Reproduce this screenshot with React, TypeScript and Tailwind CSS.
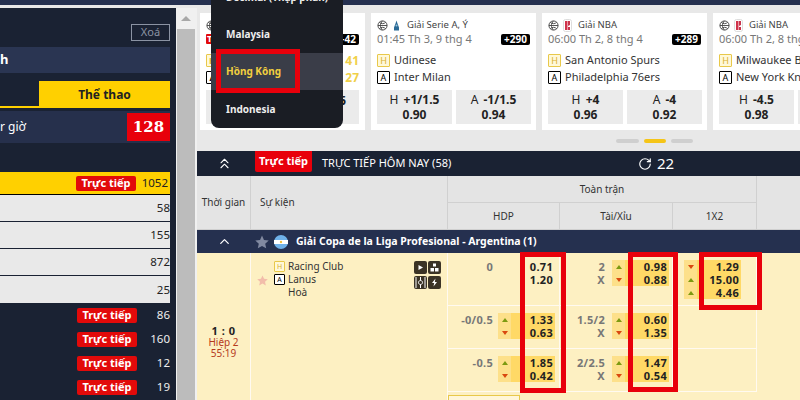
import React from 'react';
import { ChevronUp, ChevronsUp, RotateCw } from 'lucide-react';

const FONT = "[font-family:'Noto_Sans','DejaVu_Sans',sans-serif]";

const TeamTag = ({ side, small }: { side: 'H' | 'A'; small?: boolean }) => {
  const size = small ? 'h-[11px] w-[11px] text-[7px]' : 'h-[13px] w-[13px] text-[9px]';
  return (
    <span
      className={
        side === 'H'
          ? `flex shrink-0 items-center justify-center rounded-[1px] border border-[#e8c84a] bg-[#fff8d8] leading-none text-[#d8b030] ${size}`
          : `flex shrink-0 items-center justify-center rounded-[1px] border border-black bg-white leading-none text-black ${size}`
      }
    >
      {side}
    </span>
  );
};

const BallIcon = () => (
  <svg className="shrink-0" width="11" height="11" viewBox="0 0 12 12" fill="none" stroke="#444" strokeWidth="1">
    <circle cx="6" cy="6" r="5" />
    <path d="M1 6h10M6 1c-3 3-3 7 0 10M2.500 2.500c2 2 5 2 7 0M2.500 9.500c2-2 5-2 7 0" />
  </svg>
);

const LeagueLogo = ({ kind }: { kind: 'serie' | 'nba' }) => (
  <span className="flex w-[10px] shrink-0 justify-center">
    {kind === 'nba' ? (
      <svg width="9" height="13" viewBox="0 0 9 13">
        <rect x="0.500" y="0.500" width="8" height="12" rx="2" fill="#fff" stroke="#ddd" />
        <path d="M2 2h2.500v9H2z" fill="#d0334b" />
        <path d="M5 2h2v4l-2 1zM5 8h2v3H5z" fill="#c8354d" />
      </svg>
    ) : (
      <svg width="7" height="12" viewBox="0 0 7 12">
        <path d="M3.500 0.500l1 3 1.500 4v3H1v-3l1.500-4z" fill="#2a6a96" />
        <circle cx="3.500" cy="5.500" r="1" fill="#9cc6dc" />
      </svg>
    )}
  </span>
);

type CardData = {
  league: string;
  logo: 'serie' | 'nba';
  time: string;
  badge?: string;
  home: string;
  away: string;
  odds: { label: string; line: string; price: string }[];
};

const cards: CardData[] = [
  {
    league: 'Giải Serie A, Ý',
    logo: 'serie',
    time: '01:45 Th 3, 9 thg 4',
    badge: '+290',
    home: 'Udinese',
    away: 'Inter Milan',
    odds: [
      { label: 'H', line: '+1/1.5', price: '0.90' },
      { label: 'A', line: '-1/1.5', price: '0.94' },
    ],
  },
  {
    league: 'Giải NBA',
    logo: 'nba',
    time: '06:00 Th 2, 8 thg 4',
    badge: '+289',
    home: 'San Antonio Spurs',
    away: 'Philadelphia 76ers',
    odds: [
      { label: 'H', line: '+4', price: '0.96' },
      { label: 'A', line: '-4', price: '0.92' },
    ],
  },
  {
    league: 'Giải NBA',
    logo: 'nba',
    time: '06:00 Th 2, 8 thg 4',
    home: 'Milwaukee Bucks',
    away: 'New York Knicks',
    odds: [
      { label: 'H', line: '-4.5', price: '0.98' },
      { label: 'A', line: '+4.5', price: '0.90' },
    ],
  },
];

const MatchCard = ({ card }: { card: CardData }) => (
  <div className="flex h-[117px] w-[165px] shrink-0 flex-col overflow-hidden bg-white px-[6px] pt-[6px]">
    <div className="flex h-[13px] items-center gap-[3px] text-[9.500px] text-[#444]">
      <BallIcon />
      <LeagueLogo kind={card.logo} />
      <span className="ml-[3px] whitespace-nowrap">{card.league}</span>
    </div>
    <div className="flex h-[14px] items-center justify-between text-[11px] text-[#777]">
      <span className="whitespace-nowrap">{card.time}</span>
      {card.badge && (
        <span className="rounded-[2px] bg-black px-[3px] text-[10px] leading-[11px] font-bold text-white">
          {card.badge}
        </span>
      )}
    </div>
    <div className="mt-[6px] flex h-[17px] items-center gap-[4px] text-[11px] whitespace-nowrap text-[#333]">
      <TeamTag side="H" />
      {card.home}
    </div>
    <div className="flex h-[17px] items-center gap-[4px] text-[11px] whitespace-nowrap text-[#333]">
      <TeamTag side="A" />
      {card.away}
    </div>
    <div className="mt-[4px] flex shrink-0 gap-[4px]">
      {card.odds.map(odd => (
        <div
          key={odd.label}
          className="flex h-[34px] w-[75px] shrink-0 flex-col items-center justify-center bg-[#ebebeb] text-[12px] leading-[15px] text-[#222]"
        >
          <span className="whitespace-nowrap">
            {odd.label} <b className="ml-[2px]">{odd.line}</b>
          </span>
          <b>{odd.price}</b>
        </div>
      ))}
    </div>
  </div>
);

// first card sits mostly under the odds format menu
const LiveCard = () => (
  <div className="flex h-[117px] w-[165px] shrink-0 flex-col bg-white px-[6px] pt-[6px]">
    <div className="flex h-[13px] items-center">
      <BallIcon />
    </div>
    <div className="flex h-[14px] items-center justify-between">
      <span className="flex h-[10px] w-[24px] items-center rounded-[1px] bg-[#e20a0a] pl-[1px] text-[9px] font-bold text-white">
        Tr
      </span>
      <span className="rounded-[2px] bg-black px-[3px] text-[10px] leading-[11px] font-bold text-white">+42</span>
    </div>
    <div className="mt-[6px] flex h-[17px] items-center justify-between text-[12px] font-bold text-[#f0d048]">
      <TeamTag side="H" />
      41
    </div>
    <div className="flex h-[17px] items-center justify-between text-[12px] font-bold text-[#f0d048]">
      <TeamTag side="A" />
      27
    </div>
    <div className="mt-[4px] flex gap-[4px]">
      <div className="h-[34px] w-[75px] bg-[#ebebeb]" />
      <div className="flex h-[34px] w-[75px] justify-end bg-[#ebebeb] pr-[13px] pt-[2px] text-[12px] font-bold text-[#222]">
        5
      </div>
    </div>
  </div>
);

const LiveBadge = () => (
  <span className="flex h-[15px] w-[60px] shrink-0 items-center justify-center rounded-[2px] bg-[#e20a0a] text-[11px] font-bold text-white">
    Trực tiếp
  </span>
);

const Arrow = ({ up }: { up: boolean }) => (
  <span
    className={
      up
        ? 'h-0 w-0 border-x-[3px] border-b-[4px] border-x-transparent border-b-[#7c9a10]'
        : 'h-0 w-0 border-x-[3px] border-t-[4px] border-x-transparent border-t-[#d9480f]'
    }
  />
);

type Cell = { hcp?: string[]; prices: string[]; arrows?: boolean[] };

const Prices = ({ cell }: { cell: Cell }) => (
  <div className={cell.arrows ? 'flex w-[57px] bg-[#ffd966]' : 'flex w-[57px]'}>
    <div className={cell.arrows ? 'flex w-[13px] flex-col bg-[#fde08a]' : 'w-[13px]'}>
      {cell.arrows?.map((up, i) => (
        <span key={i} className="flex h-[13px] items-center justify-center">
          <Arrow up={up} />
        </span>
      ))}
    </div>
    <div className="flex-1 pr-[2px] text-right text-[11px] font-bold tracking-[0.3px] text-[#222]">
      {cell.prices.map(price => (
        <div key={price} className="h-[13px] leading-[13px]">
          {price}
        </div>
      ))}
    </div>
  </div>
);

const MarketCell = ({ cell, width, gap }: { cell: Cell; width: string; gap: string }) => (
  <div className={`flex items-start pt-[7px] ${width} border-r border-[#fffaf0]`}>
    <div className="w-[45px] text-right text-[11px] font-bold tracking-[0.3px] text-[#777]">
      {cell.hcp?.map(h => (
        <div key={h} className="h-[13px] leading-[13px]">
          {h}
        </div>
      ))}
    </div>
    <div className={gap} />
    <Prices cell={cell} />
  </div>
);

const oddsRows: { height: string; hdp: Cell; ou: Cell }[] = [
  {
    height: 'h-[53px]',
    hdp: { hcp: ['0'], prices: ['0.71', '1.20'] },
    ou: { hcp: ['2', 'X'], prices: ['0.98', '0.88'], arrows: [true, false] },
  },
  {
    height: 'h-[43px]',
    hdp: { hcp: ['-0/0.5'], prices: ['1.33', '0.63'], arrows: [true, false] },
    ou: { hcp: ['1.5/2', 'X'], prices: ['0.60', '1.35'], arrows: [true, false] },
  },
  {
    height: 'h-[43px]',
    hdp: { hcp: ['-0.5'], prices: ['1.85', '0.42'], arrows: [true, false] },
    ou: { hcp: ['2/2.5', 'X'], prices: ['1.47', '0.54'], arrows: [true, false] },
  },
];

const RedFrame = ({ className }: { className: string }) => (
  <div className={`pointer-events-none absolute border-[5px] border-[#e8000b] ${className}`} />
);

const MiniIcon = ({ children }: { children: React.ReactNode }) => (
  <span className="flex h-[13px] w-[13px] items-center justify-center rounded-[2px] bg-[#3b3325]">
    <svg width="11" height="11" viewBox="0 0 11 11" fill="#fff">
      {children}
    </svg>
  </span>
);

const sportRows = ['58', '155', '872', '25'];
const liveRows = ['86', '160', '12', '19'];

const Sidebar = () => (
  <div className="flex w-[176px] shrink-0 flex-col overflow-hidden bg-[#1a2233] pr-[6px] pt-[16px] text-[11.500px]">
    <div className="flex shrink-0 justify-end">
      <span className="flex h-[17px] w-[39px] items-center justify-center border border-[#8b93a3] text-[11px] text-[#8b93a3]">
        Xoá
      </span>
    </div>
    <div className="mt-[6px] flex h-[26px] shrink-0 items-center bg-[#2a3552] text-[13px] font-bold text-white">h</div>
    <div className="mt-[8px] flex h-[27px] shrink-0">
      <div className="w-[39px] border-b-[2px] border-[#ffd000] bg-[#1a2233]" />
      <div className="flex flex-1 items-center justify-center bg-[#ffd000] text-[12px] font-bold text-[#222]">
        Thể thao
      </div>
    </div>
    <div className="mt-[3px] flex h-[32px] shrink-0 items-center justify-between bg-[#26304c] text-[12px] text-white">
      <span>r giờ</span>
      <span className="flex h-[28px] w-[43px] items-center justify-center bg-[#e8000b] text-[15px] font-bold [font-family:'DejaVu_Serif',serif]">
        128
      </span>
    </div>
    <div className="mt-[29px] flex h-[23px] shrink-0 items-center border-b border-black bg-[#ffd000] pl-[76px] pr-[2px] text-[#222]">
      <LiveBadge />
      <span className="flex-1 text-right">1052</span>
    </div>
    {sportRows.map((n, i) => (
      <div
        key={n}
        className={
          i < 3
            ? 'flex h-[27px] shrink-0 items-center justify-end border-b border-[#1a2233] bg-[#e9e9e9] text-[#222]'
            : 'flex h-[27px] shrink-0 items-center justify-end bg-[#e9e9e9] text-[#222]'
        }
      >
        {n}
      </div>
    ))}
    {liveRows.map(n => (
      <div key={n} className="flex h-[24px] shrink-0 items-center pl-[77px] text-[#eee]">
        <LiveBadge />
        <span className="flex-1 text-right">{n}</span>
      </div>
    ))}
  </div>
);

const Scrollbar = () => (
  <div className="flex w-[21px] shrink-0 flex-col bg-[#f0f0f0] pl-[1px] pr-[2px]">
    <div className="flex h-[21px] items-center justify-center">
      <span className="h-0 w-0 border-x-[5px] border-b-[5px] border-x-transparent border-b-[#a8a8a8]" />
    </div>
    <div className="flex-1 bg-[#bcbcbc]" />
  </div>
);

const App = () => (
  <div className={`relative h-[400px] w-[800px] overflow-hidden bg-[#e8e8e8] ${FONT}`}>
    <div className="h-[5px] bg-[#25304f]" />
    <div className="flex h-[395px] pt-[3px]">
      <Sidebar />
      <Scrollbar />
      <div className="relative flex min-w-0 flex-1 flex-col overflow-hidden text-[10px]">
        <div className="ml-[3px] mt-[5px] flex h-[117px] shrink-0 gap-[6px]">
          <LiveCard />
          {cards.map(card => (
            <MatchCard key={card.league + card.home} card={card} />
          ))}
        </div>
        <div className="flex h-[21px] shrink-0 items-center gap-[5px] pl-[419px]">
          <span className="h-[4px] w-[23px] rounded-full bg-[#cfcfcf]" />
          <span className="h-[4px] w-[22px] rounded-full bg-[#f5c518]" />
          <span className="h-[4px] w-[22px] rounded-full bg-[#cfcfcf]" />
        </div>

        <div className="flex h-[25px] shrink-0 items-center bg-[#1a2233] text-white">
          <div className="flex w-[54px] shrink-0 justify-center">
            <ChevronsUp size={17} strokeWidth={1.5} />
          </div>
          <span className="ml-[4px] flex h-[21px] w-[57px] shrink-0 items-center justify-center self-start rounded-b-[2px] bg-[#e8000b] text-[11px] font-bold">
            Trực tiếp
          </span>
          <span className="ml-[10px] w-[316px] shrink-0 text-[11px]">TRỰC TIẾP HÔM NAY (58)</span>
          <span className="flex items-center gap-[5px] text-[15px]">
            <RotateCw size={14} strokeWidth={2} />
            22
          </span>
        </div>

        <div className="flex h-[53px] shrink-0 bg-[#e4e4e4] text-[#333]">
          <div className="flex w-[54px] shrink-0 items-center justify-center border-r border-[#d0d0d0]">Thời gian</div>
          <div className="flex w-[197px] shrink-0 items-center border-r border-[#d0d0d0] pl-[9px]">Sự kiện</div>
          <div className="flex flex-col">
            <div className="flex h-[27px] w-[309px] items-center justify-center border-b border-r border-[#d0d0d0]">
              Toàn trận
            </div>
            <div className="flex h-[26px]">
              <div className="flex w-[112px] items-center justify-center border-r border-[#d0d0d0]">HDP</div>
              <div className="flex w-[113px] items-center justify-center border-r border-[#d0d0d0]">Tài/Xỉu</div>
              <div className="flex w-[84px] items-center justify-center border-r border-[#d0d0d0]">1X2</div>
            </div>
          </div>
        </div>

        <div className="flex h-[24px] shrink-0 items-center border-t border-[#cfcfcf] bg-[#25304f] text-white">
          <div className="flex w-[54px] shrink-0 justify-center">
            <ChevronUp size={15} strokeWidth={2} />
          </div>
          <svg className="ml-[4px] shrink-0" width="14" height="14" viewBox="0 0 24 24" fill="#8189a0">
            <path d="M12 1l3.400 7.400 8.100.900-6 5.500 1.700 8-7.200-4.100-7.200 4.100 1.700-8-6-5.500 8.100-.900z" />
          </svg>
          <svg className="ml-[5px] shrink-0" width="14" height="14" viewBox="0 0 14 14">
            <circle cx="7" cy="7" r="7" fill="#6fb1e8" />
            <rect x="0" y="5" width="14" height="4" fill="#fff" />
            <circle cx="7" cy="7" r="1.200" fill="#f0c040" />
          </svg>
          <span className="ml-[8px] whitespace-nowrap text-[10.500px] font-bold">
            Giải Copa de la Liga Profesional - Argentina (1)
          </span>
        </div>

        <div className="flex h-[176px] shrink-0 bg-[#fdf0c2] text-[#333]">
          <div className="flex h-[176px] w-[54px] shrink-0 flex-col items-center justify-center border-r border-[#fffaf0] leading-[11px]">
            <b className="text-[11px] leading-[13px] tracking-[0.5px] text-[#222]">1 : 0</b>
            <span className="text-[#b5391c]">Hiệp 2</span>
            <span className="text-[#b5391c]">55:19</span>
          </div>
          <div className="flex w-[197px] shrink-0 border-r border-[#fffaf0] pt-[7px] leading-[13px]">
            <svg className="ml-[6px] mt-[15px] shrink-0" width="11" height="11" viewBox="0 0 24 24" fill="#f2bdaa">
              <path d="M12 1l3.400 7.400 8.100.900-6 5.500 1.700 8-7.200-4.100-7.200 4.100 1.700-8-6-5.500 8.100-.900z" />
            </svg>
            <div className="ml-[6px] flex flex-col">
              <div className="flex h-[13px] items-center gap-[3px] whitespace-nowrap">
                <TeamTag side="H" small />
                Racing Club
              </div>
              <div className="flex h-[13px] items-center gap-[3px] whitespace-nowrap">
                <TeamTag side="A" small />
                Lanus
              </div>
              <div className="h-[13px] pl-[14px]">Hoà</div>
            </div>
            <div className="ml-auto mr-[6px] mt-[1px] grid h-[28px] grid-cols-2 gap-[1px]">
              <MiniIcon>
                <path d="M3.500 3l4.500 2.500L3.500 8z" />
              </MiniIcon>
              <MiniIcon>
                <path d="M4 1.500h3v3H4zM1.500 6h3.500v3.500H1.500zM6 6h3.500v3.500H6z" />
              </MiniIcon>
              <MiniIcon>
                <path
                  d="M1 0v11M5.500 0v3.500M5.500 7.500V11M10 0v11M5.500 3.500a2 2 0 1 0 .01 0"
                  fill="none"
                  stroke="#fff"
                  strokeWidth="1"
                />
              </MiniIcon>
              <MiniIcon>
                <path d="M6.500 1.500L3 6h2.200l-.700 3.500L8 5H5.800z" />
              </MiniIcon>
            </div>
          </div>
          <div className="flex flex-col">
            {oddsRows.map(row => (
              <div key={row.hdp.prices[0]} className={`flex shrink-0 ${row.height} border-b border-[#fffaf0]`}>
                <MarketCell cell={row.hdp} width="w-[112px]" gap="w-[5px]" />
                <MarketCell cell={row.ou} width="w-[113px]" gap="w-[7px]" />
                {row.hdp.prices[0] === '0.71' ? (
                  <div className="w-[84px] border-r border-[#fffaf0] pl-[11px] pt-[7px]">
                    <Prices cell={{ prices: ['1.29', '15.00', '4.46'], arrows: [false, true, true] }} />
                  </div>
                ) : (
                  <div className="w-[84px] border-r border-[#fffaf0]" />
                )}
              </div>
            ))}
            <div className="mt-[3px] h-[20px] w-[72px] shrink-0 border border-[#e8c84a] bg-[#fff6d8]" />
          </div>
        </div>
        <RedFrame className="left-[323px] top-[244px] h-[141px] w-[46px]" />
        <RedFrame className="left-[431px] top-[244px] h-[140px] w-[50px]" />
        <RedFrame className="left-[502px] top-[244px] h-[58px] w-[63px]" />
      </div>
    </div>

    <div className="absolute left-[211px] top-[-21px] w-[132px] overflow-hidden rounded-b-[8px] bg-[#1a1d24] text-[10px] font-bold text-[#eee]">
      <div className="flex h-[37px] items-center pl-[15px] whitespace-nowrap">Decimal (Thập phân)</div>
      <div className="flex h-[37px] items-center pl-[15px]">Malaysia</div>
      <div className="flex h-[37px] items-center bg-[#3a3d48] pl-[15px] text-[#f2cf3f]">Hồng Kông</div>
      <div className="flex h-[38px] items-center pl-[15px]">Indonesia</div>
    </div>
    <RedFrame className="left-[216px] top-[49px] h-[44px] w-[84px]" />
  </div>
);

export default App;
